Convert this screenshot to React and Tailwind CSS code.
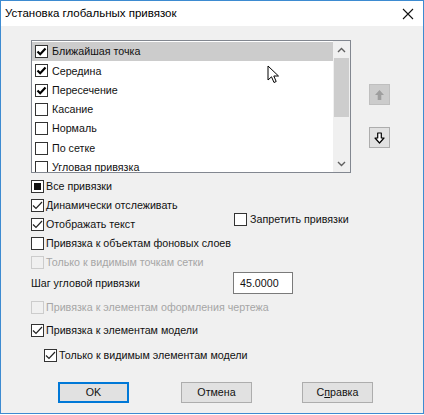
import React from "react";

function Check({ kind = "thin", state = "off", disabled = false }) {
  const border = disabled ? "border-[#cccccc]" : "border-[#333333]";
  const bg = disabled ? "bg-[#f0f0f0]" : "bg-white";
  return (
    <div className={`w-[13px] h-[13px] border ${border} ${bg} flex items-center justify-center shrink-0`}>
      {state === "on" && kind === "bold" && (
        <svg width="11" height="11" viewBox="0 0 11 11">
          <path d="M1.5 5.5 L4.2 8.2 L9.5 2.5" fill="none" stroke="#000" strokeWidth="2.2" />
        </svg>
      )}
      {state === "on" && kind === "thin" && (
        <svg width="11" height="11" viewBox="0 0 11 11">
          <path d="M1 5.5 L4 8.5 L10 2" fill="none" stroke="#222" strokeWidth="1.2" />
        </svg>
      )}
      {state === "ind" && <div className="w-[7px] h-[7px] bg-[#111]" />}
    </div>
  );
}

function Row({ children, state, disabled, kind, className = "" }) {
  return (
    <div className={`h-[19px] flex items-center gap-[2px] ${className}`}>
      <Check state={state} disabled={disabled} kind={kind} />
      <span className={disabled ? "text-[#a6a6a6]" : "text-[#111]"}>{children}</span>
    </div>
  );
}

const items = [
  ["Ближайшая точка", true],
  ["Середина", true],
  ["Пересечение", true],
  ["Касание", false],
  ["Нормаль", false],
  ["По сетке", false],
  ["Угловая привязка", false],
];

export default function App() {
  return (
    <div className="w-[424px] h-[415px] bg-white font-['Liberation_Sans',Arial,sans-serif] text-[10.7px] leading-none text-[#111]">
      <div className="w-[424px] h-[414px] border border-[#3d8bd1] flex flex-col bg-[#f0f0f0]">
        <div className="h-[25px] bg-white flex items-center justify-between pl-[4px] pr-[9px]">
          <span className="text-[11.5px] text-[#000]">Установка глобальных привязок</span>
          <svg width="12" height="12" viewBox="0 0 12 12">
            <path d="M1 1 L11 11 M11 1 L1 11" stroke="#111" strokeWidth="1.1" />
          </svg>
        </div>
        <div className="flex-1 pl-[30px] pt-[14px] relative">
          <div className="flex">
            <div className="w-[320px] h-[133px] border border-[#828790] bg-white flex">
              <div className="flex-1 flex flex-col overflow-hidden pt-[1px]">
                {items.map(([t, c], i) => (
                  <div
                    key={t}
                    className={`h-[19.3px] shrink-0 flex items-center pl-[3px] gap-[4px] ${i === 0 ? "bg-[#cccccc]" : ""}`}
                  >
                    <Check kind="bold" state={c ? "on" : "off"} />
                    <span>{t}</span>
                  </div>
                ))}
              </div>
              <div className="w-[17px] bg-[#f0f0f0] flex flex-col items-center">
                <div className="h-[17px] flex items-center justify-center">
                  <svg width="9" height="6" viewBox="0 0 9 6">
                    <path d="M1 5 L4.5 1.5 L8 5" fill="none" stroke="#606060" strokeWidth="1.4" />
                  </svg>
                </div>
                <div className="w-[15px] h-[59px] bg-[#cdcdcd]" />
                <div className="flex-1" />
                <div className="h-[17px] flex items-center justify-center">
                  <svg width="9" height="6" viewBox="0 0 9 6">
                    <path d="M1 1 L4.5 4.5 L8 1" fill="none" stroke="#606060" strokeWidth="1.4" />
                  </svg>
                </div>
              </div>
            </div>
            <div className="ml-[18px] pt-[44px] flex flex-col gap-[22px]">
              <div className="w-[21px] h-[21px] bg-[#cccccc] border border-[#bfbfbf] flex items-center justify-center">
                <svg width="11" height="12" viewBox="0 0 11 12">
                  <path d="M5.5 1 L10 6 L7.3 6 L7.3 11 L3.7 11 L3.7 6 L1 6 Z" fill="#9e9e9e" />
                </svg>
              </div>
              <div className="w-[21px] h-[21px] bg-[#e1e1e1] border border-[#adadad] flex items-center justify-center">
                <svg width="11" height="12" viewBox="0 0 11 12">
                  <path d="M5.5 11 L10 6 L7.3 6 L7.3 1 L3.7 1 L3.7 6 L1 6 Z" fill="#fff" stroke="#000" strokeWidth="1.2" strokeLinejoin="round" />
                </svg>
              </div>
            </div>
          </div>

          <div className="mt-[4px]">
            <Row state="ind">Все привязки</Row>
            <div className="flex">
              <div className="w-[203px]">
                <Row state="on">Динамически отслеживать</Row>
                <Row state="on">Отображать текст</Row>
              </div>
              <Row state="off" className="mt-[14px] gap-[3px]">Запретить привязки</Row>
            </div>
            <Row state="off">Привязка к объектам фоновых слоев</Row>
            <Row state="off" disabled>Только к видимым точкам сетки</Row>
            <div className="h-[22px] flex items-center">
              <span className="w-[202px]">Шаг угловой привязки</span>
              <div className="w-[60px] h-[22px] border border-[#7a7a7a] bg-white flex items-center pl-[6px]">45.0000</div>
            </div>
            <Row state="off" disabled className="mt-[4px]">Привязка к элементам оформления чертежа</Row>
            <Row state="on" className="mt-[4px]">Привязка к элементам модели</Row>
            <Row state="on" className="mt-[6px] ml-[13px]">Только к видимым элементам модели</Row>
          </div>

          <div className="mt-[17px] flex pl-[27px]">
            <div className="w-[71px] h-[21px] bg-[#e1e1e1] border-2 border-[#0078d7] flex items-center justify-center">OK</div>
            <div className="ml-[52px] w-[71px] h-[21px] bg-[#e1e1e1] border border-[#adadad] flex items-center justify-center">Отмена</div>
            <div className="ml-[50px] w-[71px] h-[21px] bg-[#e1e1e1] border border-[#adadad] flex items-center justify-center">
              <span>С<span className="underline">п</span>равка</span>
            </div>
          </div>

          <svg className="absolute left-[266px] top-[39px]" width="14" height="20" viewBox="0 0 14 20">
            <path d="M1 1 L1 15 L4.5 11.8 L7 17.5 L9.2 16.5 L6.8 11 L11.5 11 Z" fill="#fff" stroke="#000" strokeWidth="1" strokeLinejoin="round" />
          </svg>
        </div>
      </div>
    </div>
  );
}
